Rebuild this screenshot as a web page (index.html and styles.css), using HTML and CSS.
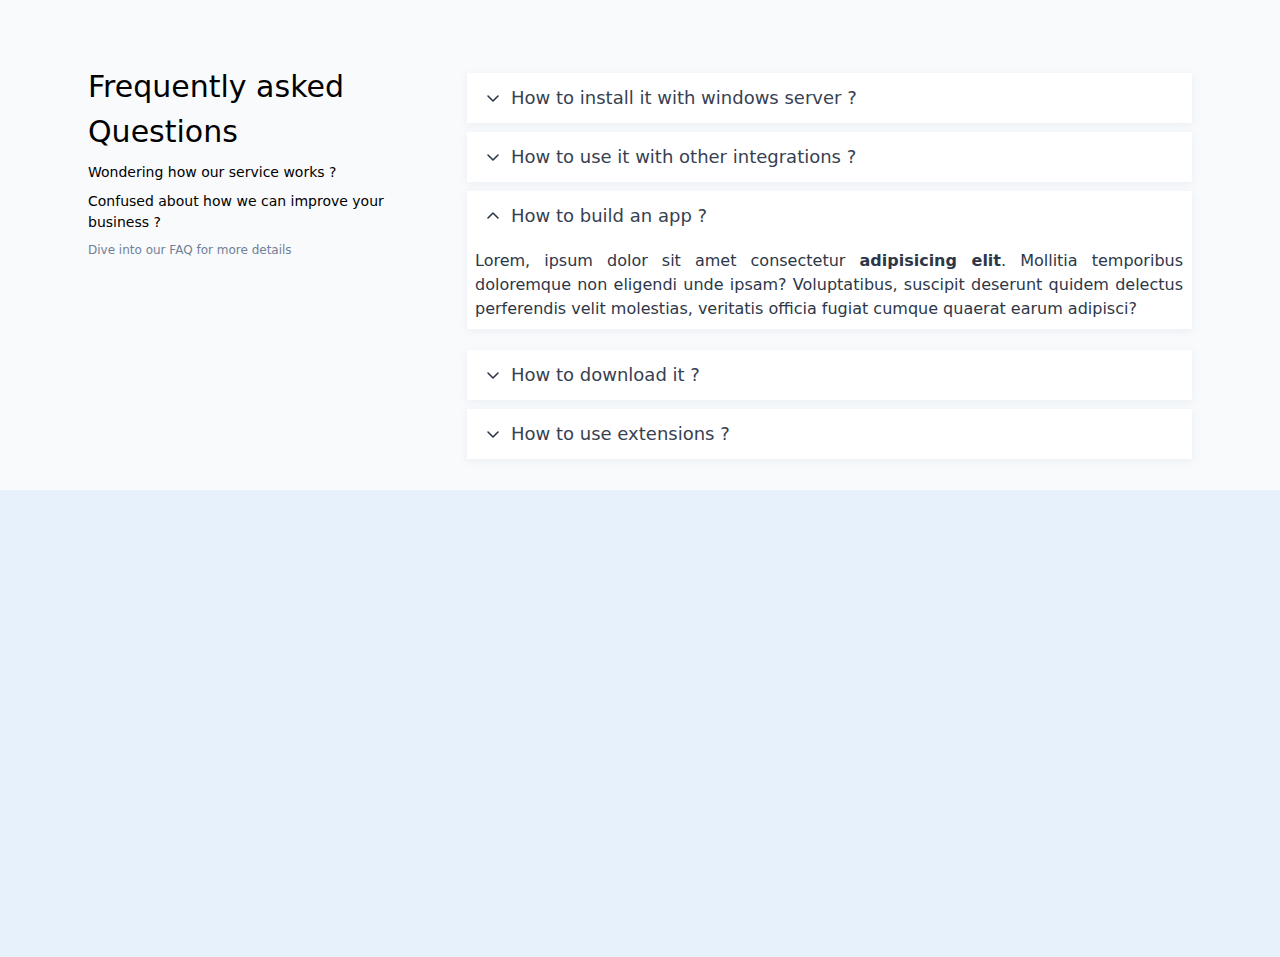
FILE: index.html
```html
<!DOCTYPE html>
<html lang="en">
<head>
    <meta charset="UTF-8">
    <meta name="viewport" content="width=device-width, initial-scale=1.0">
    <title>FAQ</title>
    <link rel="stylesheet" href="styles.css">
</head>
<body>

    <!-- FAQ Section -->
    <section class="faq">
        <div class="faq-inner">
            <div class="faq-intro">
                <h1>Frequently asked Questions</h1>
                <p class="lead">Wondering how our service works ?</p>
                <p class="lead">Confused about how we can improve your business ?</p>
                <p class="hint">Dive into our FAQ for more details</p>
            </div>

            <div class="faq-list">
                <div class="faq-item">
                    <div class="faq-question">
                        <svg class="chevron" viewBox="0 0 16 16"><polyline points="3,6 8,11 13,6"/></svg>
                        How to install it with windows server ?
                    </div>
                </div>
                <div class="faq-item">
                    <div class="faq-question">
                        <svg class="chevron" viewBox="0 0 16 16"><polyline points="3,6 8,11 13,6"/></svg>
                        How to use it with other integrations ?
                    </div>
                </div>
                <div class="faq-item open">
                    <div class="faq-question">
                        <svg class="chevron" viewBox="0 0 16 16"><polyline points="3,10 8,5 13,10"/></svg>
                        How to build an app ?
                    </div>
                    <p class="faq-answer">
                        Lorem, ipsum dolor sit amet consectetur <b>adipisicing elit</b>. Mollitia temporibus doloremque non eligendi unde ipsam? Voluptatibus, suscipit deserunt quidem delectus perferendis velit molestias, veritatis officia fugiat cumque quaerat earum adipisci?
                    </p>
                </div>
                <div class="faq-item">
                    <div class="faq-question">
                        <svg class="chevron" viewBox="0 0 16 16"><polyline points="3,6 8,11 13,6"/></svg>
                        How to download it ?
                    </div>
                </div>
                <div class="faq-item">
                    <div class="faq-question">
                        <svg class="chevron" viewBox="0 0 16 16"><polyline points="3,6 8,11 13,6"/></svg>
                        How to use extensions ?
                    </div>
                </div>
            </div>
        </div>
    </section>

</body>
</html>
```

FILE: styles.css
```css
body {
    margin: 0;
    font-family: "DejaVu Sans", sans-serif;
    background: #e7f1fb;
    min-height: 100vh;
}

/* Top section */
.faq {
    background: #f8fafc;
    padding: 64px 0 30px;
    border-bottom: 1px solid #fcfdfe;
}

.faq-inner {
    width: 1104px;
    margin: 0 auto;
    display: grid;
    grid-template-columns: 340px 1fr;
    gap: 39px;
}

.faq-intro h1 {
    margin: 0 0 8px;
    font-size: 30px;
    font-weight: normal;
    line-height: 45px;
    color: #000;
}

.lead {
    margin: 0 0 8px;
    font-size: 14px;
    line-height: 21px;
    color: #000;
}

.hint {
    margin: 8px 0 0;
    font-size: 12px;
    line-height: 18px;
    color: #718096;
}

/* Accordion */
.faq-list {
    padding-top: 9px;
}

.faq-item {
    background: #fff;
    margin-bottom: 9px;
    box-shadow: 0 2px 8px rgba(148, 163, 184, 0.12);
}

.faq-item:last-child {
    margin-bottom: 0;
}

.faq-item.open {
    margin-bottom: 21px;
}

.faq-question {
    display: flex;
    align-items: center;
    gap: 10px;
    padding: 11px 18px;
    font-size: 18px;
    line-height: 28px;
    color: #374151;
}

.chevron {
    width: 16px;
    height: 16px;
    fill: none;
    stroke: #2d3748;
    stroke-width: 1.6;
    stroke-linecap: round;
    stroke-linejoin: round;
}

.faq-answer {
    margin: 0;
    padding: 8px 9px 8px 8px;
    font-size: 16px;
    line-height: 24px;
    text-align: justify;
    color: #2d3748;
}
```
